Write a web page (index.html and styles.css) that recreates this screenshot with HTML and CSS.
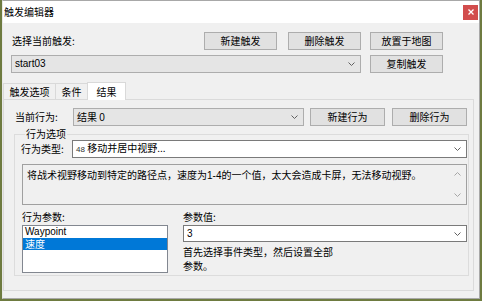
FILE: index.html
```html
<!DOCTYPE html>
<html>
<head>
<meta charset="utf-8">
<link rel="stylesheet" href="styles.css">
</head>
<body>
<div class="window">
  <div class="titlebar">
    <span class="title">触发编辑器</span>
    <span class="close"><svg width="6" height="6" viewBox="0 0 6 6"><path d="M0.5 0.5L5.5 5.5M5.5 0.5L0.5 5.5" stroke="#fff" stroke-width="1.3"/></svg></span>
  </div>
  <div class="main">
    <div class="top">
      <div class="row1">
        <span class="lbl">选择当前触发:</span>
        <div class="btns">
          <div class="btn">新建触发</div>
          <div class="btn">删除触发</div>
        </div>
      </div>
      <div class="btn">放置于地图</div>
      <div class="combo gray"><span class="latin">start03</span><svg class="chev" width="7" height="4" viewBox="0 0 7 4"><path d="M0.5 0.5L3.5 3.5L6.5 0.5" fill="none" stroke="#606060"/></svg></div>
      <div class="btn">复制触发</div>
    </div>
    <div class="tabs">
      <div class="tab t1">触发选项</div>
      <div class="tab t2">条件</div>
      <div class="tab t3 sel">结果</div>
    </div>
    <div class="page">
      <div class="currow">
        <span class="curlbl">当前行为:</span>
        <div class="combo gray cur"><span>结果 <span class="latin">0</span></span><svg class="chev" width="7" height="4" viewBox="0 0 7 4"><path d="M0.5 0.5L3.5 3.5L6.5 0.5" fill="none" stroke="#606060"/></svg></div>
        <div class="btn b2">新建行为</div>
        <div class="btn b2">删除行为</div>
      </div>
      <fieldset class="group">
        <legend>行为选项</legend>
        <div class="typerow">
          <span class="typelbl">行为类型:</span>
          <div class="combo white type"><span><span class="num">48</span> 移动并居中视野...</span><svg class="chev" width="7" height="4" viewBox="0 0 7 4"><path d="M0.5 0.5L3.5 3.5L6.5 0.5" fill="none" stroke="#606060"/></svg></div>
        </div>
        <div class="desc">
          <div class="desctext">将战术视野移动到特定的路径点，速度为<span class="latin">1-4</span>的一个值，太大会造成卡屏，无法移动视野。</div>
          <div class="scroll">
            <svg width="7" height="4" viewBox="0 0 7 4"><path d="M0.5 3.5L3.5 0.5L6.5 3.5" fill="none" stroke="#a6a6a6"/></svg>
            <svg width="7" height="4" viewBox="0 0 7 4"><path d="M0.5 0.5L3.5 3.5L6.5 0.5" fill="none" stroke="#a6a6a6"/></svg>
          </div>
        </div>
        <div class="params">
          <div class="pcol left">
            <span class="plbl">行为参数:</span>
            <div class="list">
              <div class="item latin">Waypoint</div>
              <div class="item selitem">速度</div>
            </div>
          </div>
          <div class="pcol right">
            <span class="plbl">参数值:</span>
            <div class="combo white val"><span class="latin">3</span><svg class="chev" width="7" height="4" viewBox="0 0 7 4"><path d="M0.5 0.5L3.5 3.5L6.5 0.5" fill="none" stroke="#606060"/></svg></div>
            <div class="hint">
              <div class="hl">首先选择事件类型，然后设置全部</div>
              <div class="hl">参数。</div>
            </div>
          </div>
        </div>
      </fieldset>
    </div>
  </div>
</div>
</body>
</html>
```
FILE: styles.css
```css
* { box-sizing: border-box; }
html, body { margin: 0; padding: 0; }
body {
  width: 482px;
  height: 301px;
  overflow: hidden;
  background: #6e7b40;
  font-family: "Noto Sans CJK SC", "Liberation Sans", sans-serif;
  font-size: 10px;
  line-height: 12px;
  color: #000;
}
.latin { font-family: "Liberation Sans", "Noto Sans CJK SC", sans-serif; }
.window {
  width: 478px;
  height: 299px;
  margin-left: 2px;
  border: 1px solid #a8a8a8;
  border-left-color: #e8e8e8;
  background: #f0f0f0;
  display: flex;
  flex-direction: column;
}
.titlebar {
  height: 22px;
  background: #fff;
  display: flex;
  align-items: center;
  justify-content: space-between;
  padding: 0 1px 0 1px;
}
.close {
  width: 15px;
  height: 15px;
  background: #d24d4d;
  display: flex;
  align-items: center;
  justify-content: center;
}
.main { display: flex; flex-direction: column; padding-top: 9px; }
.top {
  display: grid;
  grid-template-columns: 350px 73px;
  column-gap: 9px;
  row-gap: 5px;
  padding-left: 8px;
}
.row1 { display: flex; align-items: center; justify-content: space-between; }
.lbl { padding-left: 1px; }
.btns { display: flex; gap: 11px; }
.btn {
  width: 73px;
  height: 18px;
  background: #e1e1e1;
  border: 1px solid #adadad;
  display: flex;
  align-items: center;
  justify-content: center;
}
.combo {
  height: 18px;
  border: 1px solid #adadad;
  display: flex;
  align-items: center;
  justify-content: space-between;
  padding: 0 5px 0 3px;
}
.combo.gray { background: #e5e5e5; }
.combo.white { background: #fff; border-color: #7a7a7a; }
.chev { flex: none; }
.tabs {
  display: flex;
  align-items: flex-end;
  margin-top: 9px;
  height: 17px;
}
.tab {
  height: 16px;
  border: 1px solid #d9d9d9;
  border-bottom: none;
  background: #f0f0f0;
  display: flex;
  align-items: center;
  justify-content: center;
}
.t1 { width: 53px; }
.t2 { width: 33px; margin-left: -1px; }
.t3 { width: 39px; margin-left: -1px; }
.tab.sel {
  height: 18px;
  margin-bottom: -1px;
  background: #fff;
  position: relative;
  z-index: 1;
}
.page {
  width: 471px;
  height: 192px;
  border: 1px solid #dadada;
  padding: 8px 0 0 10px;
  display: flex;
  flex-direction: column;
}
.currow { display: flex; align-items: center; }
.curlbl { width: 59px; padding-left: 1px; }
.cur { width: 231px; }
.b2 { width: 75px; margin-left: 6px; }
.b2 + .b2 { margin-left: 7px; }
.group {
  margin: 2px 0 0 0;
  width: 455px;
  height: 148px;
  border: 1px solid #dcdcdc;
  padding: 0 1px 0 6px;
  min-width: 0;
}
.group legend { padding: 0 1px; margin-left: 4px; line-height: 12px; }
.typerow { display: flex; align-items: center; }
.typelbl { width: 51px; }
.type { flex: 1; padding-left: 3px; }
.num { font-family: "Liberation Sans", sans-serif; font-size: 8px; color: #333; }
.desc {
  margin: 6px 0 0 1px;
  height: 41px;
  border: 1px solid #a0a0a0;
  background: #f0f0f0;
  display: flex;
}
.desctext { flex: 1; padding: 4px 0 0 4px; }
.scroll {
  width: 17px;
  display: flex;
  flex-direction: column;
  justify-content: space-between;
  align-items: center;
  padding: 7px 0 7px;
}
.params { display: flex; margin-top: 6px; padding-left: 1px; }
.pcol { display: flex; flex-direction: column; }
.pcol.left { width: 161px; }
.pcol.right { flex: 1; }
.plbl { line-height: 12px; }
.list {
  margin-top: 2px;
  width: 146px;
  height: 48px;
  background: #fff;
  border: 1px solid #828790;
  padding: 0;
}
.item { height: 12px; line-height: 12px; padding-left: 2px; }
.selitem { background: #0078d7; color: #fff; }
.val { margin-top: 2px; height: 17px; padding-left: 3px; }
.hint { margin-top: 3px; }
.hl { height: 14px; line-height: 14px; }
```
